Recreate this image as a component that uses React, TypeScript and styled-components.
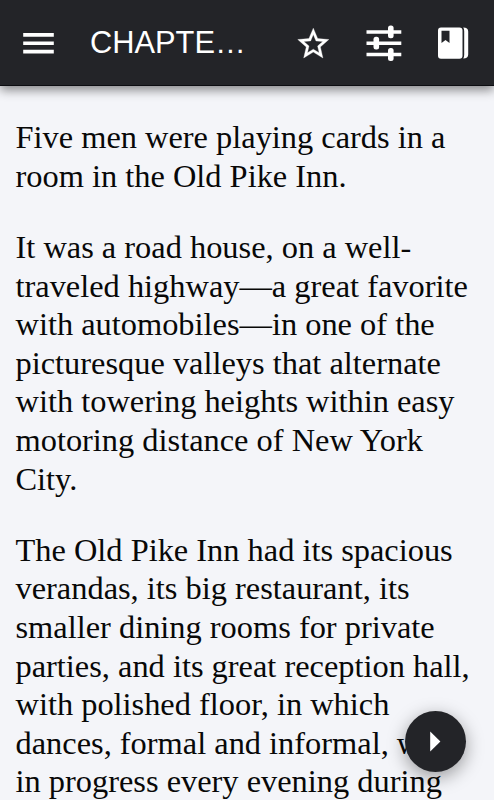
import React from "react";
import styled, { createGlobalStyle } from "styled-components";

const Global = createGlobalStyle`
  html, body { margin: 0; height: 800px; overflow: hidden; background: #f4f5f9; }
  * { box-sizing: border-box; }
`;
const Screen = styled.div`
  height: 800px;
  display: flex;
  flex-direction: column;
  overflow: hidden;
`;
const Toolbar = styled.header`
  height: 86px;
  flex: none;
  display: flex;
  align-items: center;
  padding: 0 0 0 18px;
  background: #232428;
  color: #fff;
  border-bottom: 1px solid #0c0d11;
  position: relative;
  box-shadow: 0 4px 10px rgba(0, 0, 0, 0.46);
`;
const Title = styled.h1`
  flex: none;
  margin: 1px 41px 0 31px;
  width: 163px;
  font: 400 30.8px/40px "Liberation Sans", sans-serif;
  white-space: nowrap;
`;
const IconButton = styled.button`
  display: flex;
  flex: none;
  padding: 0;
  border: 0;
  background: none;
  color: inherit;
`;
const Actions = styled.div`
  display: flex;
  gap: 30px;
`;
const Article = styled.main`
  padding: 32.3px 0 0 15.5px;
  font: 400 32.4px/38.6px "Liberation Serif", serif;
  color: #080808;
`;
const Paragraph = styled.p`
  margin: 0 0 32.6px;
  white-space: pre;
`;
const NextButton = styled.button`
  position: absolute;
  left: 405px;
  top: 710.5px;
  width: 61px;
  height: 61px;
  display: flex;
  padding: 0;
  border: 0;
  border-radius: 50%;
  background: #232428;
  color: #fff;
  box-shadow: 0 5px 18px rgba(0, 0, 0, 0.38);
`;

const paragraphs = [
  "Five men were playing cards in a\nroom in the Old Pike Inn.",
  "It was a road house, on a well-\ntraveled highway—a great favorite\nwith automobiles—in one of the\npicturesque valleys that alternate\nwith towering heights within easy\nmotoring distance of New York\nCity.",
  "The Old Pike Inn had its spacious\nverandas, its big restaurant, its\nsmaller dining rooms for private\nparties, and its great reception hall,\nwith polished floor, in which\ndances, formal and informal, were\nin progress every evening during",
];

const MenuIcon = () => (
  <svg width="41" height="41" viewBox="0 0 41 41" fill="currentColor">
    <path d="M5.2 11h30.6v3.7H5.2zM5.2 19.4h30.6v3.7H5.2zM5.2 27.8h30.6v3.7H5.2z" />
  </svg>
);
const StarIcon = () => (
  <svg width="40" height="41" viewBox="0 0 40 41" fill="currentColor">
    <path
      transform="translate(.64 3) scale(1.555 1.57)"
      stroke="currentColor"
      strokeWidth=".2"
      d="M22 9.24l-7.19-.62L12 2 9.19 8.63 2 9.24l5.46 4.73L5.82 21 12 17.27 18.18 21l-1.63-7.03L22 9.24zM12 15.4l-3.76 2.27 1-4.28-3.32-2.88 4.38-.38L12 6.1l1.71 4.04 4.38.38-3.32 2.88 1 4.28L12 15.4z"
    />
  </svg>
);
const TuneIcon = () => (
  <svg width="40" height="41" viewBox="0 0 40 41" fill="currentColor">
    <path d="M2.5 8.2h34.8v3.5H2.5zM2.5 19.4h34.8v3.5H2.5zM2.5 30.7h34.8v3.5H2.5z" />
    <rect x="24" y="3.4" width="5.6" height="12.8" rx="2.5" />
    <rect x="9.5" y="14.8" width="5.6" height="12.8" rx="2.5" />
    <rect x="24" y="26.1" width="5.6" height="12.8" rx="2.5" />
  </svg>
);
const BookIcon = () => (
  <svg width="40" height="41" viewBox="0 0 40 41" fill="currentColor">
    <path fillRule="evenodd" d="M7 5.5h18.5q3 0 3 3v25.3q0 3-3 3H7q-3 0-3-3V8.5q0-3 3-3zM7.5 8.700v12.300l4-3 4 3V8.700z" />
    <path d="M29.2 5.6q5 0 5 4v23q0 4-5 4 1-1 1-4V9.6q0-3-1-4z" />
  </svg>
);

export default function App() {
  return (
    <Screen>
      <Global />
      <Toolbar>
        <IconButton aria-label="Menu"><MenuIcon /></IconButton>
        <Title>CHAPTE…</Title>
        <Actions>
          <IconButton aria-label="Favorite"><StarIcon /></IconButton>
          <IconButton aria-label="Settings"><TuneIcon /></IconButton>
          <IconButton aria-label="Bookmarks"><BookIcon /></IconButton>
        </Actions>
      </Toolbar>
      <Article>{paragraphs.map((p) => <Paragraph key={p}>{p}</Paragraph>)}</Article>
      <NextButton aria-label="Next"><svg width="61" height="61" viewBox="0 0 61 61"><path d="M25.2 20.5v20l10.2-10z" fill="currentColor" /></svg></NextButton>
    </Screen>
  );
}
